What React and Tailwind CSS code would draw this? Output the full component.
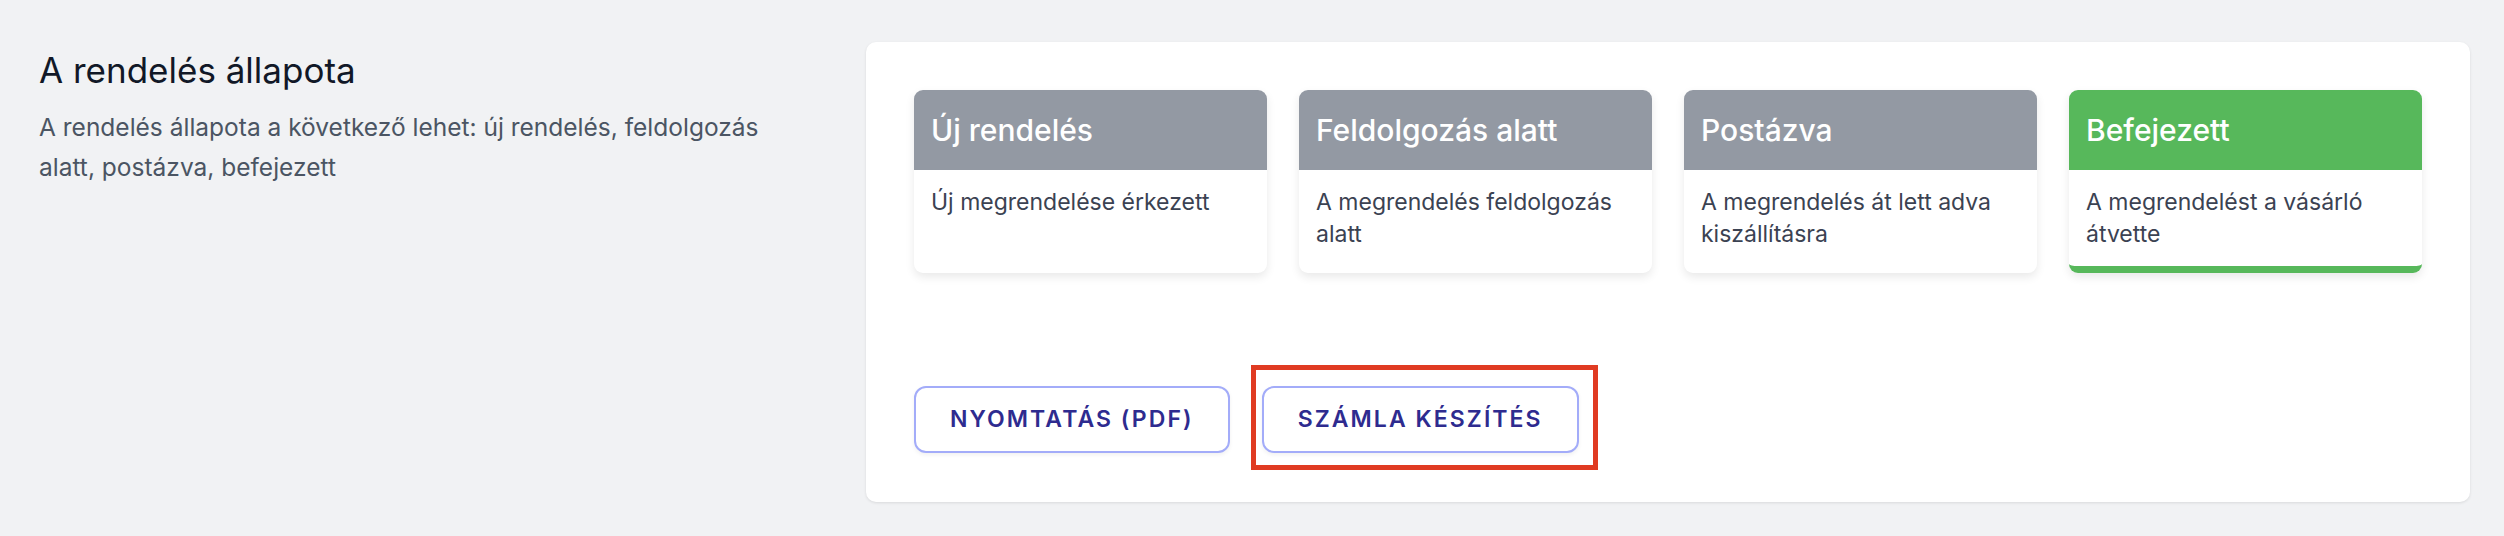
const statuses = [
  { title: 'Új rendelés', text: 'Új megrendelése érkezett', done: false },
  { title: 'Feldolgozás alatt', text: 'A megrendelés feldolgozás alatt', done: false },
  { title: 'Postázva', text: 'A megrendelés át lett adva kiszállításra', done: false },
  { title: 'Befejezett', text: 'A megrendelést a vásárló átvette', done: true },
];

function StatusCard({ status }) {
  return (
    <div
      className={`h-[183px] rounded-[9px] bg-white overflow-hidden shadow-[0_4px_10px_rgba(0,0,0,0.09)] flex flex-col ${
        status.done ? 'border-b-[7px] border-[#57b85b]' : ''
      }`}
    >
      <div
        className={`h-[80px] shrink-0 px-[17px] flex items-center text-[30px] font-medium text-white ${
          status.done ? 'bg-[#57b85b]' : 'bg-[#9399a3]'
        }`}
      >
        {status.title}
      </div>
      <div className="px-[17px] pt-[16px] text-[23px] leading-[32px] text-[#3b4252]">
        {status.text}
      </div>
    </div>
  );
}

export default function App() {
  return (
    <div
      className="min-h-[536px] w-full bg-[#f1f2f4]"
      style={{ fontFamily: 'Inter, "Noto Sans", sans-serif' }}
    >
      <div className="grid grid-cols-[777px_1604px] gap-x-[50px] pl-[39px] pr-[34px] pt-[42px]">
        {/* Bal oldali leírás */}
        <div className="pt-[6px]">
          <h3 className="text-[35px] leading-[44px] font-normal text-[#111827]">A rendelés állapota</h3>
          <p className="mt-[15px] text-[24.5px] leading-[40px] text-[#4b5563]">
            A rendelés állapota a következő lehet: új rendelés, feldolgozás alatt, postázva, befejezett
          </p>
        </div>

        {/* Állapot kártya */}
        <div className="h-[460px] rounded-[10px] bg-white shadow-[0_1px_3px_rgba(0,0,0,0.1)] p-[48px]">
          <div className="grid grid-cols-4 gap-[32px]">
            {statuses.map((s) => (
              <StatusCard key={s.title} status={s} />
            ))}
          </div>

          <div className="mt-[113px] flex gap-[32px]">
            <button className="h-[67px] px-[34px] rounded-[12px] border-2 border-[#a3acf9] bg-white shadow-[0_2px_4px_rgba(0,0,0,0.06)] text-[23px] font-semibold tracking-[0.09em] text-[#2e2b8f]">
              NYOMTATÁS (PDF)
            </button>
            <div className="relative">
              <button className="h-[67px] px-[34px] rounded-[12px] border-2 border-[#a3acf9] bg-white shadow-[0_2px_4px_rgba(0,0,0,0.06)] text-[23px] font-semibold tracking-[0.09em] text-[#2e2b8f]">
                SZÁMLA KÉSZÍTÉS
              </button>
              <div className="absolute -left-[11px] -right-[19px] -top-[21px] -bottom-[17px] border-[5px] border-[#e03b22] pointer-events-none" />
            </div>
          </div>
        </div>
      </div>
    </div>
  );
}
